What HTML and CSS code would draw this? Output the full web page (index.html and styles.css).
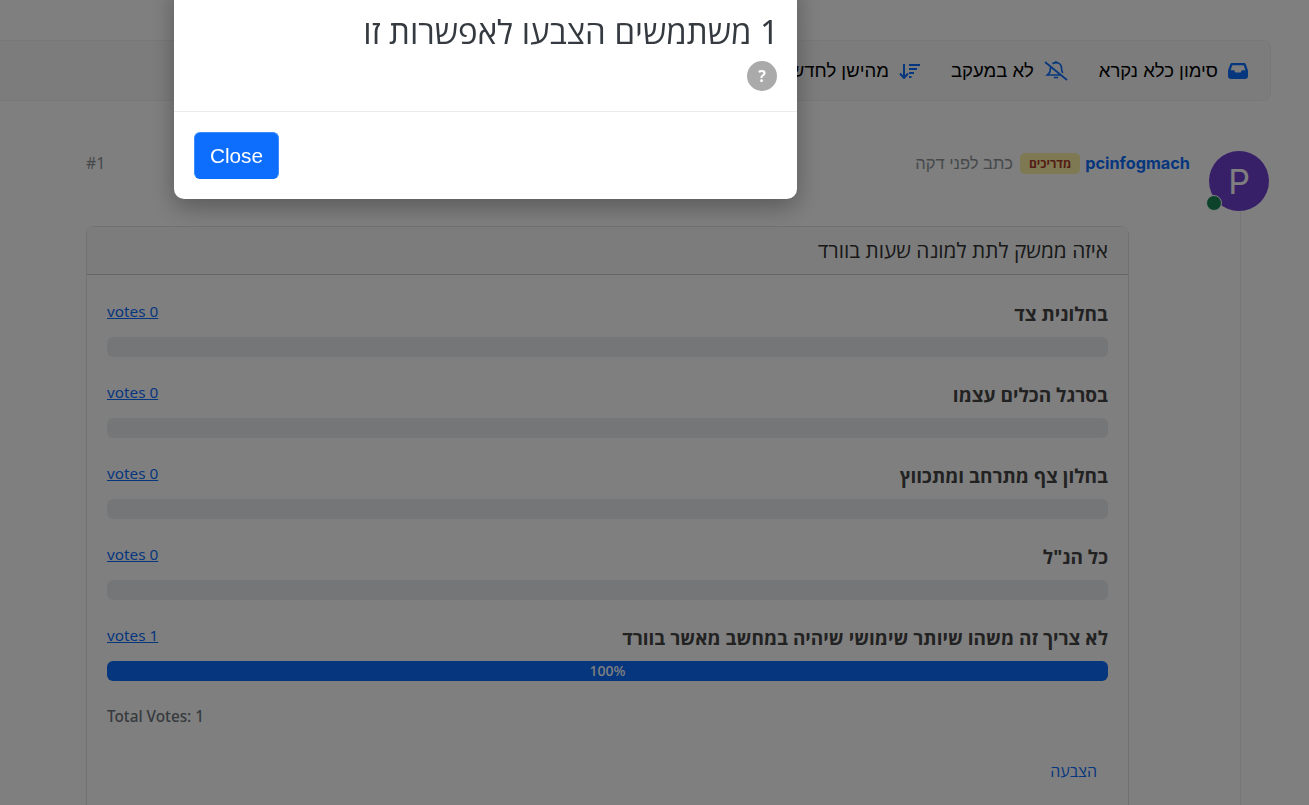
FILE: index.html
```html
<!DOCTYPE html>
<html lang="he" dir="rtl">
<head>
    <meta charset="UTF-8">
    <title>סקר</title>
    <link rel="stylesheet" href="styles.css">
</head>
<body>
    <div class="page">
        <div class="toolbar">
            <a class="tool">
                <svg class="tool_icon" width="20" height="16" viewBox="0 0 20 16"><path fill="#0d6efd" fill-rule="evenodd" d="M4 0h12c.8 0 1.500.5 1.800 1.200L20 7.500V13c0 1.700-1.300 3-3 3H3c-1.700 0-3-1.300-3-3V7.500l2.200-6.300C2.500.5 3.200 0 4 0zm.3 2.200L2.600 7.200h3.600l1.200 2.200h5.200l1.200-2.200h3.600l-1.700-5H4.300z"/></svg>
                סימון כלא נקרא
            </a>
            <a class="tool">
                <svg class="tool_icon" width="24" height="20" viewBox="0 0 24 20" fill="none" stroke="#0d6efd" stroke-width="1.700"><path d="M1 1l22 18M7 5.500C6.500 6.500 6.300 7.600 6.300 8.800c0 2.500-1.300 4-2.800 5.200h13M8.500 2.800C9.500 2.100 10.700 1.700 12 1.700c3.300 0 5.600 2.500 5.600 6 0 2 .4 3.300 1.200 4.400"/><path d="M9.800 16.500h4.400M11 1h2"/></svg>
                לא במעקב
            </a>
            <a class="tool">
                <svg class="tool_icon" width="21" height="16" viewBox="0 0 21 16" fill="none" stroke="#0d6efd" stroke-width="2"><path d="M5 1v13M1 10.500l4 4.500 4-4.500M10 2h11M10 6h8M10 10h5M10 14h2.500"/></svg>
                מהישן לחדש
            </a>
        </div>

        <div class="post">
            <div class="post_side">
                <div class="avatar">P<span class="status"></span></div>
                <div class="side_line"></div>
            </div>
            <div class="post_main">
                <div class="post_head">
                    <a class="username">pcinfogmach</a>
                    <span class="badge">מדריכים</span>
                    <span class="when">כתב לפני דקה</span>
                    <span class="post_num">#1</span>
                </div>
                <div class="poll">
                    <div class="poll_title">איזה ממשק לתת למונה שעות בוורד</div>
                    <div class="poll_body">
                        <div class="option">
                            <div class="option_top"><strong>בחלונית צד</strong><a class="votes">votes 0</a></div>
                            <div class="progress"></div>
                        </div>
                        <div class="option">
                            <div class="option_top"><strong>בסרגל הכלים עצמו</strong><a class="votes">votes 0</a></div>
                            <div class="progress"></div>
                        </div>
                        <div class="option">
                            <div class="option_top"><strong>בחלון צף מתרחב ומתכווץ</strong><a class="votes">votes 0</a></div>
                            <div class="progress"></div>
                        </div>
                        <div class="option">
                            <div class="option_top"><strong>כל הנ"ל</strong><a class="votes">votes 0</a></div>
                            <div class="progress"></div>
                        </div>
                        <div class="option">
                            <div class="option_top"><strong>לא צריך זה משהו שיותר שימושי שיהיה במחשב מאשר בוורד</strong><a class="votes">votes 1</a></div>
                            <div class="progress"><div class="progress_bar">100%</div></div>
                        </div>
                        <div class="total" dir="ltr">Total Votes: 1</div>
                        <a class="vote_btn">הצבעה</a>
                    </div>
                </div>
            </div>
        </div>
    </div>

    <div class="backdrop"></div>

    <div class="modal">
        <div class="modal_body">
            <h2>1 משתמשים הצבעו לאפשרות זו</h2>
            <span class="unknown">?</span>
        </div>
        <div class="modal_foot">
            <button>Close</button>
        </div>
    </div>
</body>
</html>
```

FILE: styles.css
```css
*{
    margin: 0;
    padding: 0;
    box-sizing: border-box;
}

html, body{
    height: 100%;
    overflow: hidden;
}

body{
    background-color: #fff;
    color: #212529;
    font-family: "Noto Sans", "Open Sans", sans-serif;
    font-size: 16px;
}

.page{
    padding: 40px 38px 0 0;
}

.toolbar{
    display: flex;
    align-items: center;
    gap: 31px;
    height: 61px;
    margin-left: -10px;
    padding: 0 22px;
    background-color: #f8f9fa;
    border: 1px solid #f1f1f3;
    border-right-color: #eee;
    border-radius: 0 8px 8px 0;
}

.tool{
    display: flex;
    align-items: center;
    gap: 10px;
    color: #000;
    font-family: "Liberation Sans", sans-serif;
    font-size: 18.5px;
    white-space: nowrap;
}

.post{
    display: flex;
    margin-top: 50px;
    margin-right: 2px;
}

.post_side{
    display: flex;
    flex-direction: column;
    align-items: center;
    width: 60px;
    flex-shrink: 0;
}

.avatar{
    position: relative;
    display: flex;
    align-items: center;
    justify-content: center;
    width: 60px;
    height: 60px;
    border-radius: 50%;
    background-color: #7040d0;
    color: #fff;
    font-size: 34px;
    font-family: "Inter", sans-serif;
}

.status{
    position: absolute;
    right: 47px;
    bottom: 0;
    width: 16px;
    height: 16px;
    border-radius: 50%;
    background-color: #198754;
    border: 1px solid #fff;
}

.side_line{
    flex: 1;
    width: 1px;
    min-height: 700px;
    margin-right: -2px;
    background-color: #eee;
}

.post_main{
    flex: 1;
    margin-right: 19px;
    margin-left: 86px;
}

.post_head{
    display: flex;
    align-items: center;
    gap: 5px;
    height: 24px;
    margin-bottom: 51px;
}

.username{
    color: #0d6efd;
    font-family: "Inter", sans-serif;
    font-weight: 700;
    font-size: 16.3px;
}

.badge{
    background-color: #fff3a6;
    color: #a83a2a;
    border-radius: 5px;
    padding: 2px 9px;
    font-size: 12px;
    font-weight: 700;
}

.when{
    margin-right: 2px;
    padding-top: 1px;
    color: #8c9399;
    font-family: "Liberation Sans", sans-serif;
    font-size: 16.5px;
}

.post_num{
    margin-right: auto;
    color: #8c9399;
    font-size: 16px;
}

.poll{
    margin-right: 61px;
    border: 1px solid #dee2e6;
    border-radius: 8px;
}

.poll_title{
    height: 48px;
    padding: 9px 20px;
    background-color: #f8f9fa;
    border-bottom: 1px solid #ccc;
    font-size: 20.8px;
    color: #333;
}

.poll_body{
    padding: 21px 20px;
    height: 700px;
}

.option{
    margin-bottom: 20px;
}

.option_top{
    display: flex;
    justify-content: space-between;
    height: 41px;
    padding-top: 5px;
    font-size: 19px;

    strong{
        color: #444;
    }
}

.votes{
    color: #0d6efd;
    text-decoration: underline;
    font-size: 15.3px;
}

.progress{
    height: 20px;
    background-color: #e9ecef;
    border-radius: 6px;
    overflow: hidden;
}

.progress_bar{
    height: 100%;
    background-color: #0d6efd;
    color: #fff;
    font-size: 14px;
    font-weight: 500;
    line-height: 20px;
    text-align: center;
}

.total{
    margin-top: 25px;
    color: #6c757d;
    font-size: 15.3px;
    font-weight: 500;
}

.vote_btn{
    display: block;
    margin: 34px 11px 0 0;
    color: #0d6efd;
    font-size: 16px;
}

.backdrop{
    position: fixed;
    inset: 0;
    background-color: rgba(0, 0, 0, 0.5);
}

.modal{
    position: fixed;
    top: -20px;
    left: 174px;
    width: 623px;
    height: 219px;
    background-color: #fff;
    border-radius: 10px;
    box-shadow: 0 8px 24px rgba(0, 0, 0, 0.3);
}

.modal_body{
    height: 132px;
    padding: 32px 18px 0 20px;
    border-bottom: 1px solid #e9ecef;

    h2{
        font-size: 33px;
        font-weight: 400;
        line-height: 40px;
        color: #343a40;
    }
}

.unknown{
    display: block;
    width: 30px;
    height: 30px;
    margin: 9px 2px 0 0;
    border-radius: 50%;
    background-color: #aaa;
    color: #fff;
    font-weight: 700;
    font-size: 16px;
    line-height: 30px;
    text-align: center;
}

.modal_foot{
    padding: 20px;
    direction: ltr;

    button{
        width: 85px;
        height: 47px;
        border: 1px solid #3d8bfd;
        border-bottom-color: #0d6efd;
        border-radius: 6px;
        background-color: #0d6efd;
        color: #fff;
        font-family: "Liberation Sans", sans-serif;
        font-size: 20.8px;
    }
}
```
